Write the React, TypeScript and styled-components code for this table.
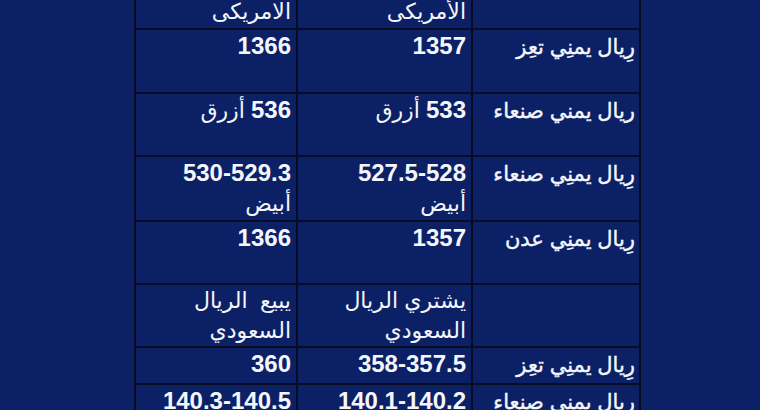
import React from "react";
import styled, { createGlobalStyle } from "styled-components";

const GlobalStyle = createGlobalStyle`
  html, body {
    margin: 0;
    padding: 0;
    background: #0c2165;
    overflow: hidden;
  }
  body {
    font-family: "Liberation Sans", "DejaVu Sans", sans-serif;
  }
`;

interface RateRow {
  label: string;
  buy: React.ReactNode;
  sell: React.ReactNode;
  height: number;
}

const rows: RateRow[] = [
  {
    label: "",
    buy: (
      <>
        يشتري الدولار
        <br />
        الأمريكى
      </>
    ),
    sell: (
      <>
        يبيع الدولار
        <br />
        الامريكى
      </>
    ),
    height: 64,
  },
  { label: "رِيال يمنِي تعِز", buy: <Num>1357</Num>, sell: <Num>1366</Num>, height: 64 },
  {
    label: "ريال يمني صنعاء",
    buy: (
      <>
        <Num>533</Num> أزرق
      </>
    ),
    sell: (
      <>
        <Num>536</Num> أزرق
      </>
    ),
    height: 63,
  },
  {
    label: "رِيال يمنِي صنعاء",
    buy: (
      <>
        <Num>527.5-528</Num>
        <br />
        أبيض
      </>
    ),
    sell: (
      <>
        <Num>530-529.3</Num>
        <br />
        أبيض
      </>
    ),
    height: 65,
  },
  { label: "رِيال يمنِي عدن", buy: <Num>1357</Num>, sell: <Num>1366</Num>, height: 63 },
  {
    label: "",
    buy: (
      <>
        يشتري الريال
        <br />
        السعودي
      </>
    ),
    sell: (
      <>
        يبيع&nbsp; الريال
        <br />
        السعودي
      </>
    ),
    height: 63,
  },
  { label: "رِيال يمنِي تعِز", buy: <Num>358-357.5</Num>, sell: <Num>360</Num>, height: 37 },
  { label: "ريال يمني صنعاء", buy: <Num>140.1-140.2</Num>, sell: <Num>140.3-140.5</Num>, height: 40 },
];

export default function App() {
  return (
    <>
      <GlobalStyle />
      <Page>
        <RateTable dir="rtl">
          <colgroup>
            <Col $w={168} />
            <Col $w={175} />
            <Col $w={162} />
          </colgroup>
          <tbody>
            {rows.map((r, i) => (
              <Row key={i} $h={r.height}>
                <LabelCell>{r.label}</LabelCell>
                <Cell>{r.buy}</Cell>
                <Cell>{r.sell}</Cell>
              </Row>
            ))}
          </tbody>
        </RateTable>
      </Page>
    </>
  );
}

function Num({ children }: { children: React.ReactNode }) {
  return <Bold>{children}</Bold>;
}

const Page = styled.div`
  width: 760px;
  height: 410px;
  padding-left: 134px;
  box-sizing: border-box;
  overflow: hidden;
`;

const RateTable = styled.table`
  margin-top: -36px;
  width: 507px;
  table-layout: fixed;
  border-collapse: collapse;
  border: 2px solid #070c24;
`;

const Col = styled.col<{ $w: number }>`
  width: ${(p) => p.$w}px;
`;

const Row = styled.tr<{ $h: number }>`
  height: ${(p) => p.$h}px;
`;

const Cell = styled.td`
  border: 2px solid #070c24;
  padding: 1px 5px 0;
  vertical-align: top;
  text-align: right;
  color: #f4f6fb;
  font-size: 22px;
  line-height: 30px;
  white-space: nowrap;
  overflow: hidden;
`;

const LabelCell = styled(Cell)`
  padding: 2px 4px 0;
  font-size: 21px;
  font-weight: 400;
  -webkit-text-stroke: 0.4px #f4f6fb;
`;

const Bold = styled.span`
  font-weight: 700;
  font-size: 24px;
`;
